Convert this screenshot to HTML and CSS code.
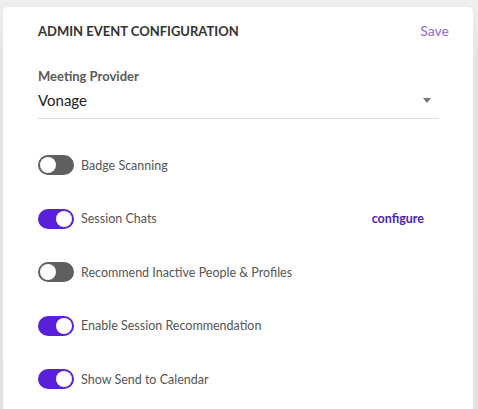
FILE: index.html
```html
<!DOCTYPE html>
<html>
<head>
<meta charset="utf-8">
<link rel="stylesheet" href="styles.css">
</head>
<body>
<div class="card">
  <div class="header">
    <h1 class="title">ADMIN EVENT CONFIGURATION</h1>
    <span class="save">Save</span>
  </div>
  <div class="field">
    <div class="field-label">Meeting Provider</div>
    <div class="select">
      <span class="select-value">Vonage</span>
      <span class="caret"></span>
    </div>
  </div>
  <div class="toggles">
    <div class="row">
      <span class="switch"><span class="knob"></span></span>
      <span class="label">Badge Scanning</span>
    </div>
    <div class="row">
      <span class="switch on"><span class="knob"></span></span>
      <span class="label">Session Chats</span>
      <span class="configure">configure</span>
    </div>
    <div class="row">
      <span class="switch"><span class="knob"></span></span>
      <span class="label">Recommend Inactive People &amp; Profiles</span>
    </div>
    <div class="row">
      <span class="switch on"><span class="knob"></span></span>
      <span class="label">Enable Session Recommendation</span>
    </div>
    <div class="row">
      <span class="switch on"><span class="knob"></span></span>
      <span class="label">Show Send to Calendar</span>
    </div>
  </div>
</div>
</body>
</html>
```

FILE: styles.css
```css
html, body {
  margin: 0;
  padding: 0;
  height: 100%;
  overflow: hidden;
}
body {
  background: linear-gradient(#efefef, #e4e4e4 60px, #e2e2e2);
  font-family: "Lato", "Open Sans", sans-serif;
  padding: 7px 5px 0 3px;
  box-sizing: border-box;
}
.card {
  background: #fff;
  border-radius: 5px 5px 0 0;
  height: 420px;
  padding: 15px 35px 0 35px;
  box-sizing: border-box;
}
.header {
  display: flex;
  justify-content: space-between;
  align-items: baseline;
}
.title {
  margin: 0;
  font-size: 13px;
  font-weight: 700;
  color: #333;
}
.save {
  font-size: 14px;
  color: #8d6ad8;
  margin-right: -11px;
}
.field {
  margin-top: 29px;
  width: 401px;
}
.field-label {
  font-size: 13px;
  font-weight: 700;
  color: #5a5a5a;
}
.select {
  display: flex;
  justify-content: space-between;
  align-items: center;
  border-bottom: 1px solid #ddd;
  padding: 7px 0 9px;
}
.select-value {
  font-size: 15px;
  color: #222;
}
.caret {
  width: 0;
  height: 0;
  border-left: 4px solid transparent;
  border-right: 4px solid transparent;
  border-top: 5px solid #777;
  margin-right: 8px;
}
.toggles {
  display: flex;
  flex-direction: column;
  gap: 33.5px;
  margin-top: 36px;
}
.row {
  display: flex;
  align-items: center;
  height: 20px;
}
.switch {
  position: relative;
  width: 36px;
  height: 20px;
  border-radius: 10px;
  background: #5f5f5f;
  flex: none;
}
.switch .knob {
  position: absolute;
  top: 2px;
  left: 2px;
  width: 16px;
  height: 16px;
  border-radius: 50%;
  background: #fff;
}
.switch.on {
  background: #5a1fd8;
}
.switch.on .knob {
  left: 18px;
}
.label {
  font-size: 12.5px;
  color: #555;
  margin-left: 7px;
}
.configure {
  margin-left: auto;
  margin-right: 14px;
  font-size: 12.5px;
  font-weight: 700;
  color: #4b22b9;
}
```
